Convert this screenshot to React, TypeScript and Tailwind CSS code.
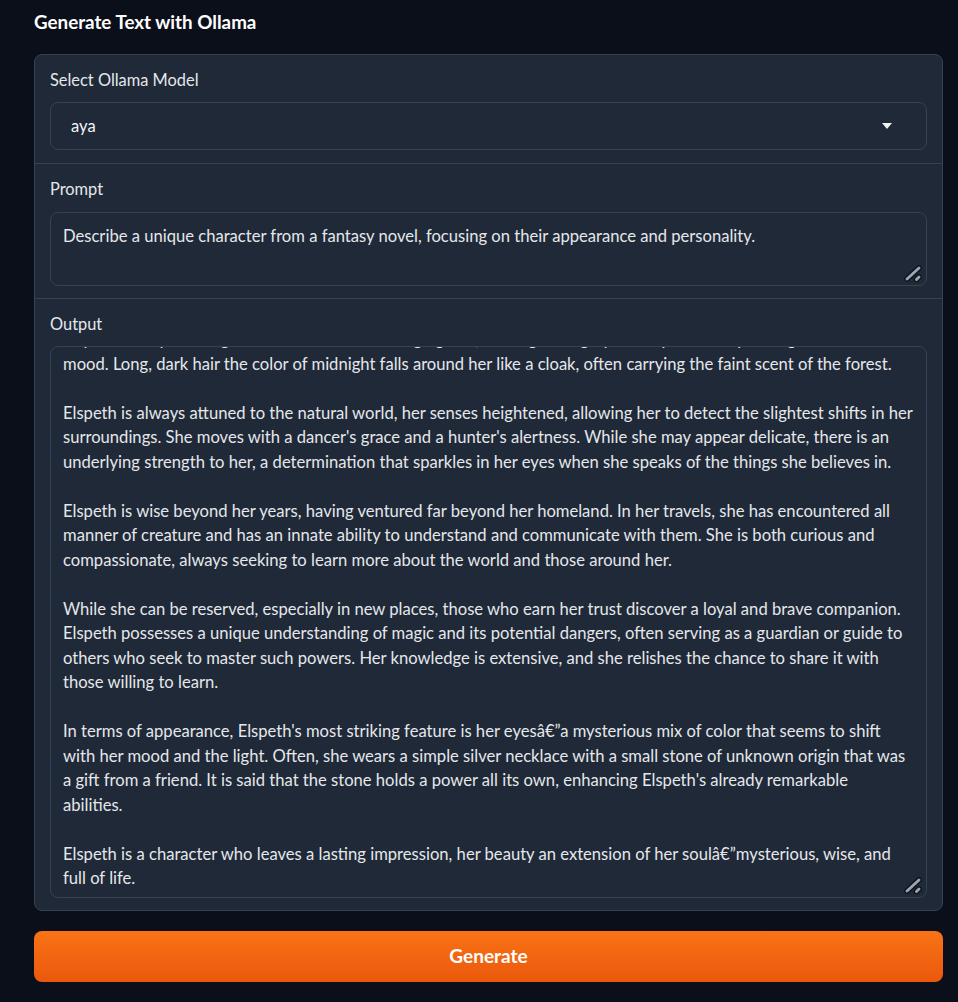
const outputLines = [
  "Elspeth has eyes that glimmer with an ever-changing hue, shifting from gray to deep violet depending on her",
  "mood. Long, dark hair the color of midnight falls around her like a cloak, often carrying the faint scent of the forest.",
  "",
  "Elspeth is always attuned to the natural world, her senses heightened, allowing her to detect the slightest shifts in her",
  "surroundings. She moves with a dancer's grace and a hunter's alertness. While she may appear delicate, there is an",
  "underlying strength to her, a determination that sparkles in her eyes when she speaks of the things she believes in.",
  "",
  "Elspeth is wise beyond her years, having ventured far beyond her homeland. In her travels, she has encountered all",
  "manner of creature and has an innate ability to understand and communicate with them. She is both curious and",
  "compassionate, always seeking to learn more about the world and those around her.",
  "",
  "While she can be reserved, especially in new places, those who earn her trust discover a loyal and brave companion.",
  "Elspeth possesses a unique understanding of magic and its potential dangers, often serving as a guardian or guide to",
  "others who seek to master such powers. Her knowledge is extensive, and she relishes the chance to share it with",
  "those willing to learn.",
  "",
  "In terms of appearance, Elspeth's most striking feature is her eyesâ€\u201da mysterious mix of color that seems to shift",
  "with her mood and the light. Often, she wears a simple silver necklace with a small stone of unknown origin that was",
  "a gift from a friend. It is said that the stone holds a power all its own, enhancing Elspeth's already remarkable",
  "abilities.",
  "",
  "Elspeth is a character who leaves a lasting impression, her beauty an extension of her soulâ€\u201dmysterious, wise, and",
  "full of life.",
];

// Resize grip drawn in the corner of each textarea
const ResizeGrip = () => (
  <svg
    className="absolute right-[3px] bottom-[3px]"
    width="20"
    height="18"
    viewBox="0 0 20 18"
  >
    <path d="M4 15 L16 4" stroke="#0b0f19" strokeWidth="5.5" strokeLinecap="round" />
    <path d="M4 15 L16 4" stroke="#9ca3af" strokeWidth="3" strokeLinecap="round" />
    <path d="M13.5 15.5 L16 13" stroke="#0b0f19" strokeWidth="5.5" strokeLinecap="round" />
    <path d="M13.5 15.5 L16 13" stroke="#9ca3af" strokeWidth="3" strokeLinecap="round" />
  </svg>
);

const Label = ({ children }: { children: string }) => (
  <div className="h-5 leading-5 text-[16.4px] text-[#e5e7eb]">{children}</div>
);

const App = () => {
  return (
    <div
      className="min-h-screen w-full bg-[#0b0f19] pl-[34px] pr-[15px] text-[#e5e7eb]"
      style={{ fontFamily: "Lato, 'Liberation Sans', sans-serif" }}
    >
      {/* Title */}
      <h1 className="h-[42px] pt-[10px] leading-6 text-[18.8px] font-bold text-white">
        Generate Text with Ollama
      </h1>

      {/* Main panel */}
      <div className="mt-[12px] rounded-lg border border-[#374151] bg-[#1f2937]">
        {/* Model select */}
        <div className="px-[15px] pt-[15px] pb-[13px] flex flex-col gap-3">
          <Label>Select Ollama Model</Label>
          <div className="h-[48px] rounded-lg border border-[#374151] bg-[#1f2937] flex items-center justify-between pl-[20px] pr-[34px]">
            <span className="text-[16.6px] text-[#f3f4f6]">aya</span>
            <svg width="10" height="6" viewBox="0 0 10 6">
              <path d="M0 0 H10 L5 6 Z" fill="#f3f4f6" />
            </svg>
          </div>
        </div>

        {/* Prompt */}
        <div className="border-t border-[#374151] px-[15px] pt-[15px] pb-[12px] flex flex-col gap-[13px]">
          <Label>Prompt</Label>
          <div className="relative h-[74px] rounded-lg border border-[#374151] bg-[#1f2937] px-[12px] pt-[11px]">
            <div className="leading-6 text-[16.6px] text-[#e5e7eb] whitespace-nowrap">
              Describe a unique character from a fantasy novel, focusing on their appearance and personality.
            </div>
            <ResizeGrip />
          </div>
        </div>

        {/* Output */}
        <div className="border-t border-[#374151] px-[15px] pt-[15px] pb-[12px] flex flex-col gap-3">
          <Label>Output</Label>
          <div className="relative h-[552px] rounded-lg border border-[#374151] bg-[#1f2937] px-[12px] overflow-hidden">
            <div className="-mt-[20px] text-[16.6px] leading-[24.5px] text-[#e5e7eb]">
              {outputLines.map((line, i) => (
                <div key={i} className="h-[24.5px] whitespace-nowrap">
                  {line}
                </div>
              ))}
            </div>
            <ResizeGrip />
          </div>
        </div>
      </div>

      {/* Generate button */}
      <button className="mt-[20px] h-[51px] w-full rounded-lg bg-gradient-to-b from-[#f97316] to-[#ea580c] text-[19px] font-bold text-white">
        Generate
      </button>
    </div>
  );
};

export default App;
